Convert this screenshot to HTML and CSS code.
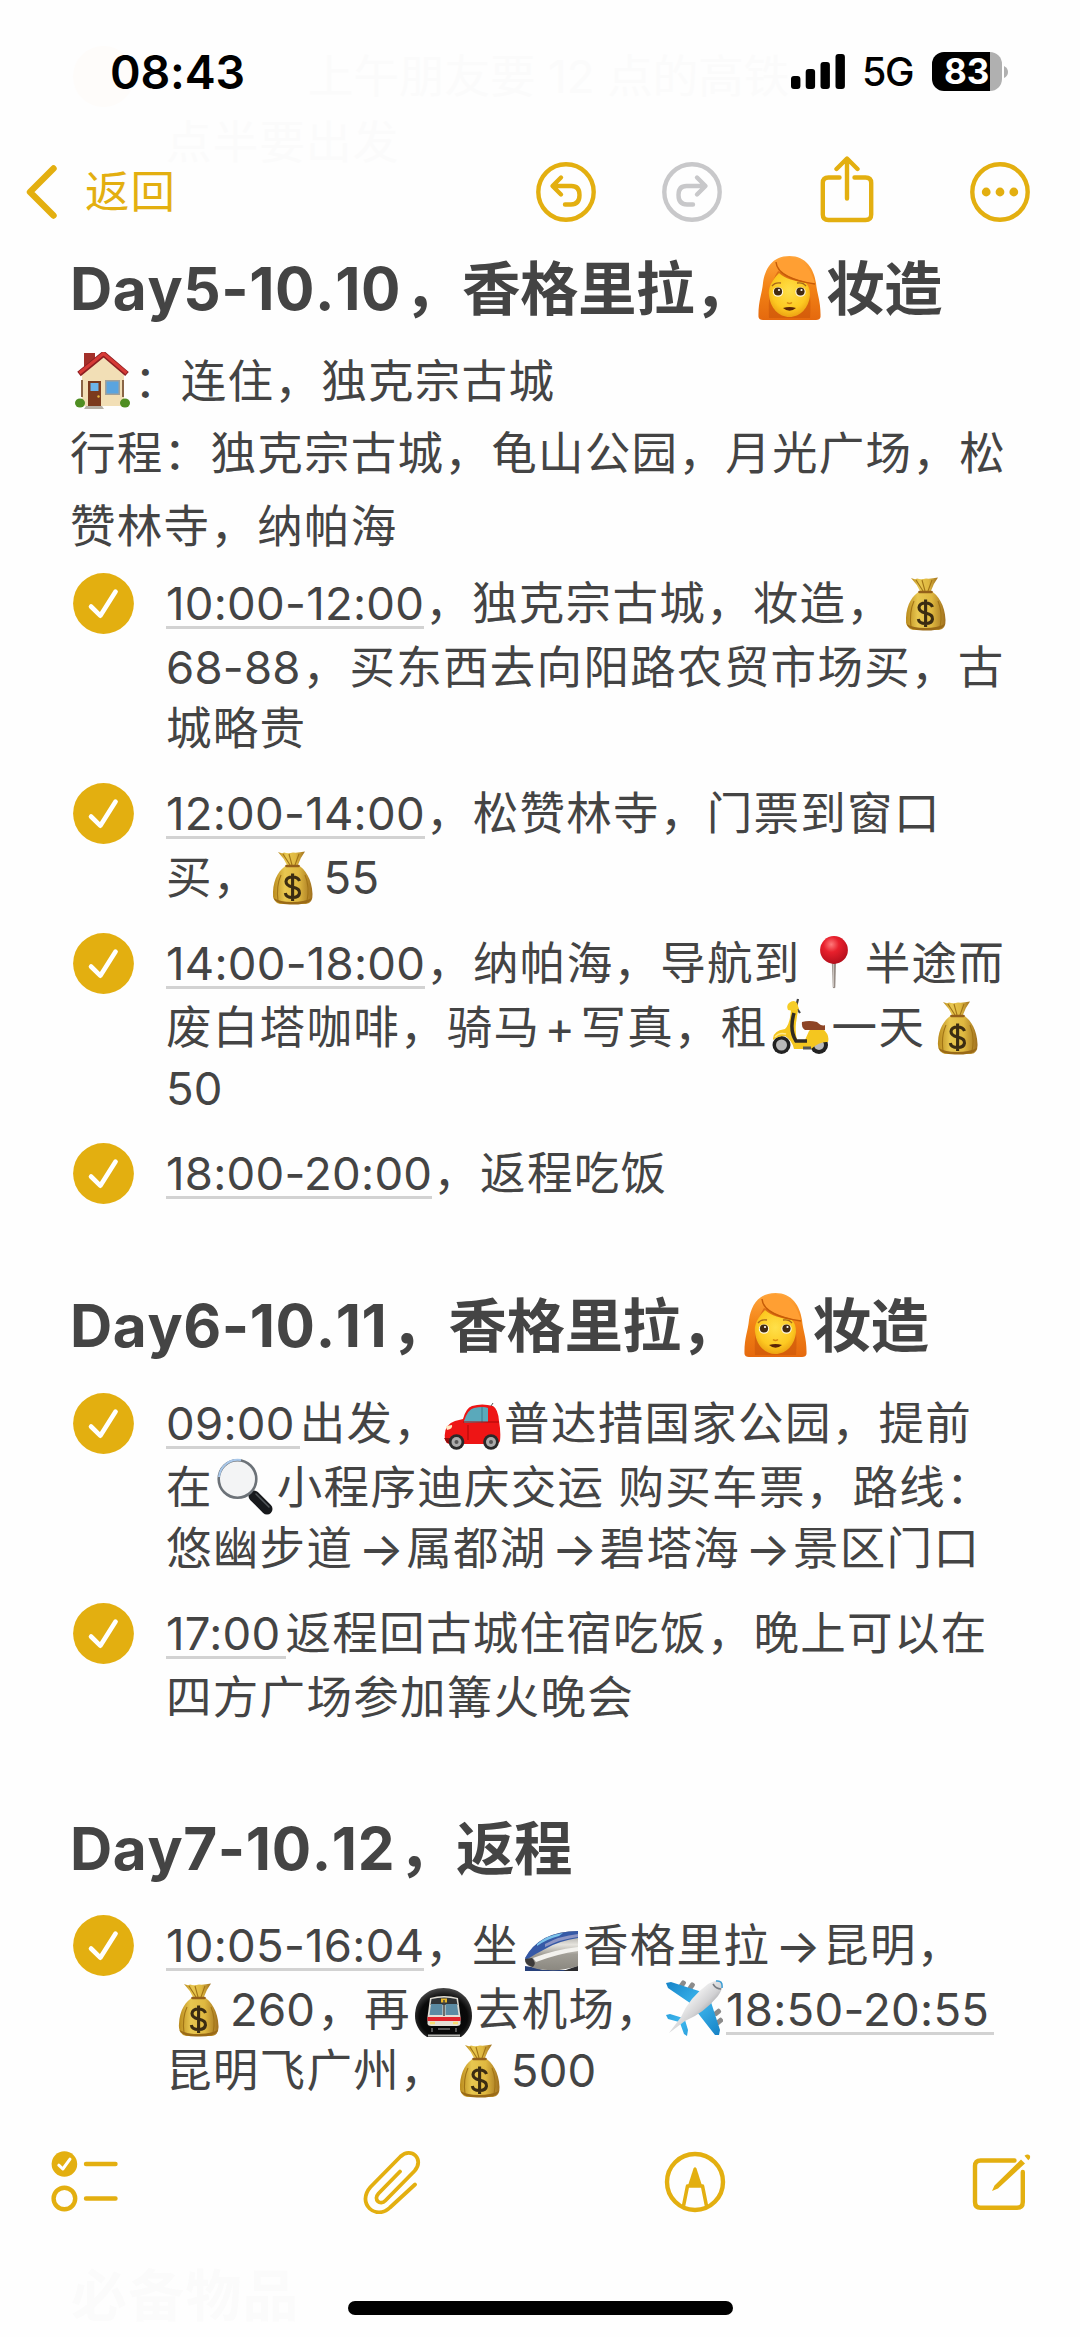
FILE: index.html
```
<!DOCTYPE html>
<html lang="zh-CN">
<head>
	<meta charset="UTF-8">
	<title>备忘录</title>
	<link rel="stylesheet" href="styles.css">
</head>
<body>

<!-- icons used several times in the page -->
<svg class="defs" width="0" height="0">
	<defs>
		<linearGradient id="gBag" x1="0" x2="1" y1="0" y2="0">
			<stop offset="0" stop-color="#b98a1c"/>
			<stop offset=".3" stop-color="#e8c750"/>
			<stop offset=".65" stop-color="#dfb840"/>
			<stop offset="1" stop-color="#a0701e"/>
		</linearGradient>
		<linearGradient id="gHair" x1="0" x2="0" y1="0" y2="1">
			<stop offset="0" stop-color="#ffa63d"/>
			<stop offset=".5" stop-color="#f28215"/>
			<stop offset="1" stop-color="#e5690e"/>
		</linearGradient>
		<radialGradient id="gFace" cx=".5" cy=".4" r=".6">
			<stop offset="0" stop-color="#ffe04a"/>
			<stop offset=".7" stop-color="#fdc921"/>
			<stop offset="1" stop-color="#eda313"/>
		</radialGradient>
		<radialGradient id="gPin" cx=".4" cy=".3" r=".7">
			<stop offset="0" stop-color="#ff7a7a"/>
			<stop offset=".4" stop-color="#e8202c"/>
			<stop offset="1" stop-color="#b50f1c"/>
		</radialGradient>
		<linearGradient id="gTrain" x1="0" x2="0" y1="0" y2="1">
			<stop offset="0" stop-color="#8c8b86"/>
			<stop offset=".35" stop-color="#e6e4de"/>
			<stop offset=".6" stop-color="#a09d95"/>
			<stop offset="1" stop-color="#8b8880"/>
		</linearGradient>
		<linearGradient id="gBlue" x1="0" x2="1" y1="0" y2="1">
			<stop offset="0" stop-color="#1583c8"/>
			<stop offset=".5" stop-color="#3db7ee"/>
			<stop offset="1" stop-color="#1580c4"/>
		</linearGradient>
		<linearGradient id="gBody" x1="0" x2="1" y1="0" y2="1">
			<stop offset=".3" stop-color="#fafafa"/>
			<stop offset=".55" stop-color="#d2d2d4"/>
			<stop offset=".75" stop-color="#8c8c90"/>
		</linearGradient>
		<radialGradient id="gTunnel" cx=".5" cy=".6" r=".6">
			<stop offset="0" stop-color="#000"/>
			<stop offset=".7" stop-color="#0a0a0a"/>
			<stop offset="1" stop-color="#4a4a4a"/>
		</radialGradient>
	</defs>

	<symbol id="check" viewBox="0 0 61 61">
		<circle cx="30.5" cy="30.5" r="30.4" fill="#e3af10"/>
		<path d="M18 33.5L27.3 42.7L42.6 18.6" fill="none" stroke="#fff" stroke-width="4.6" stroke-linecap="round" stroke-linejoin="round"/>
	</symbol>

	<symbol id="woman" viewBox="0 0 63 64">
		<path d="M31.5 0C14 0 7 13 5 27C4 38 0 46 .5 61Q1 64 5 64H58Q62 64 62.5 61C63 46 59 38 58 27C56 13 48 0 31.5 0Z" fill="url(#gHair)"/>
		<path d="M20 15C12 28 10 40 11 62H52C53 46 53 34 46 24Z" fill="#c9540a" opacity=".55"/>
		<path d="M21 17C13 25 10 33 11 39C12 52 21 61 31.5 61C42 61 51 52 52 39C52 34 51 30 48 27C37 25 27 23 21 17Z" fill="url(#gFace)"/>
		<path d="M18 7C22 20 38 24 57 28C54 14 45 3 32 1C26 1 22 3 18 7Z" fill="#ff9f33"/>
		<path d="M18 6C19 18 36 25 57 28" fill="none" stroke="#c65c08" stroke-width="1.4"/>
		<ellipse cx="20" cy="36" rx="5.2" ry="4.8" fill="#fff8e0"/>
		<ellipse cx="42.5" cy="36" rx="5.2" ry="4.8" fill="#fff8e0"/>
		<circle cx="20" cy="35.5" r="4.1" fill="#432a10"/>
		<circle cx="42.5" cy="35.5" r="4.1" fill="#432a10"/>
		<circle cx="21" cy="34" r="1.1" fill="#fff"/>
		<circle cx="43.5" cy="34" r="1.1" fill="#fff"/>
		<path d="M14 30Q17 26 23 27M39 27Q45 26 48 30" fill="none" stroke="#a8671a" stroke-width="1.3"/>
		<path d="M29 46.5Q31.5 48.5 34 46.5" fill="none" stroke="#d98a10" stroke-width="1.5"/>
		<path d="M25 52Q31.5 50 38 52Q31.5 57.5 25 52Z" fill="#5c2508"/>
	</symbol>

	<symbol id="house" viewBox="0 0 57 57">
		<rect x="10" y="1" width="11" height="17" fill="#a3302a"/>
		<path d="M8 22L30 3L50 22V54H8Z" fill="#f2dfb6"/>
		<path d="M8 28V45M49 28V45" stroke="#8a6546" stroke-width="2"/>
		<path d="M5 22L29.5 2L53 22" fill="none" stroke="#8d1f22" stroke-width="5.5" stroke-linejoin="round"/>
		<path d="M5.5 21L29.5 1.5L52.5 21" fill="none" stroke="#d63a36" stroke-width="3"/>
		<rect x="14" y="29" width="13" height="25" fill="#7b3a1e"/>
		<rect x="16.5" y="31" width="8" height="8" fill="#6cb4ea"/>
		<circle cx="24.5" cy="44.5" r="1.2" fill="#e8b640"/>
		<rect x="31" y="28" width="15" height="15" fill="#a3a098"/>
		<rect x="32.5" y="29.5" width="12" height="12" fill="#5aa4e0"/>
		<ellipse cx="6" cy="51" rx="5" ry="4.5" fill="#4f8e22"/>
		<ellipse cx="51" cy="51" rx="5" ry="4.5" fill="#4f8e22"/>
		<path d="M12 54H28L30 57H10Z" fill="#b5b0a6"/>
	</symbol>

	<symbol id="bag" viewBox="0 0 57 57">
		<path d="M14 4Q18 6 20 4.5Q24 6 29 4.5Q34 5 41 3.5Q36 10 33.5 18H23.5Q20 10 14 4Z" fill="url(#gBag)"/>
		<path d="M23 17C16 21 9.5 30 9 44Q8 54 16 56H42Q49 55 48.5 46C48 31 41 21 34 17Z" fill="url(#gBag)"/>
		<path d="M19 6L26 17M25 6L28 17M35 6L31 17M17 27Q12 38 14 53M41 27Q46 39 43 53" fill="none" stroke="#a17416" stroke-width="1.1"/>
		<path d="M9.5 50Q12 57 28 56.5Q46 57 48 50Q40 54 28 54Q16 54 9.5 50Z" fill="#9a6a17"/>
		<path d="M22.5 18H34.5" stroke="#94601a" stroke-width="2.6" stroke-linecap="round"/>
		<path d="M35.5 33Q34 29 28.5 29Q22.5 29 22 33.5Q22 37.5 28.5 39Q36 40.5 35.5 45Q35 49.5 28.5 49.5Q22 49.5 21.3 45M28.6 25.5V53" fill="none" stroke="#3b2c12" stroke-width="3.1"/>
	</symbol>

	<symbol id="pin" viewBox="0 0 57 57">
		<path d="M26.8 28H31L30.3 53.5Q29 55 27.8 53.5Z" fill="#968c86"/>
		<path d="M28.3 30V53" stroke="#d8d1cc" stroke-width="1"/>
		<circle cx="29" cy="16" r="13.9" fill="url(#gPin)"/>
	</symbol>

	<symbol id="scooter" viewBox="0 0 57 57">
		<circle cx="9.5" cy="47" r="9" fill="#222"/>
		<circle cx="9.5" cy="47" r="5.5" fill="#b9b9b9"/>
		<circle cx="47" cy="47" r="9" fill="#222"/>
		<circle cx="47" cy="47" r="5" fill="#b9b9b9"/>
		<path d="M26 1L24 9L28 15" fill="none" stroke="#444" stroke-width="2.2"/>
		<path d="M17 5Q22 1 25 5L27 11Q23 14 16 12Q14 8 17 5Z" fill="#f6cd27"/>
		<path d="M19 12H26L24 25Q23 35 25 42H33L37 33Q43 26 51 31Q58 37 56 44Q48 43 39 51H22Q20 42 13 38Q6 38 1 42Q0 33 13 31Q18 26 19 12Z" fill="#f4c61f"/>
		<path d="M22 15Q17 32 24 43H35" fill="none" stroke="#302a22" stroke-width="3.5"/>
		<path d="M3 39Q7 34 14 36" fill="none" stroke="#ffe98a" stroke-width="1.5"/>
		<path d="M30 24Q37 22 45 24Q50 29 53 27V32H33Q29 29 30 24Z" fill="#8e4526"/>
		<path d="M31 50H39" stroke="#555" stroke-width="3"/>
	</symbol>

	<symbol id="car" viewBox="0 0 57 57">
		<path d="M1 45Q-1 31 11 27L19 25Q22 14 28 12Q38 9 49 12Q54 15 55 27Q57 38 56 47Q55 50 51 50H6Q2 50 1 45Z" fill="#ee1515"/>
		<path d="M20 27Q24 15 30 14Q39 12 44 14V28L22 29Q19 29 20 27Z" fill="#5aa9bb"/>
		<path d="M38 13V29" stroke="#397b8c" stroke-width="1"/>
		<path d="M19 28H55M24 31V46" stroke="#a80808" stroke-width="1"/>
		<path d="M2 32L8 31Q9 35 3 36Z" fill="#ffe9c4"/>
		<path d="M47 12L49 9" stroke="#555" stroke-width="1"/>
		<path d="M0 44H8V49H3Z" fill="#940b0b"/>
		<circle cx="12.5" cy="48" r="7.8" fill="#292929"/>
		<circle cx="12.5" cy="48" r="5" fill="#aaa"/>
		<circle cx="12.5" cy="48" r="2" fill="#555"/>
		<circle cx="47" cy="48" r="7.8" fill="#292929"/>
		<circle cx="47" cy="48" r="5" fill="#aaa"/>
		<circle cx="47" cy="48" r="2" fill="#555"/>
	</symbol>

	<symbol id="magnifier" viewBox="0 0 57 57">
		<path d="M32 35L38 40" stroke="#888" stroke-width="4"/>
		<path d="M37 38L50 51" stroke="#17191c" stroke-width="11" stroke-linecap="round"/>
		<path d="M39 36L52 49" stroke="#53575b" stroke-width="1.5" stroke-linecap="round"/>
		<circle cx="20.5" cy="21" r="18.8" fill="#f3f4f5" stroke="#6c7278" stroke-width="2.6"/>
		<path d="M2 19A19 19 0 0 1 24 2" fill="none" stroke="#a9c8ea" stroke-width="2"/>
	</symbol>

	<symbol id="train" viewBox="0 0 57 57">
		<path d="M2 50Q12 51 20 54H55V55H2Z" fill="#27407a"/>
		<path d="M2 43Q9 29 22 22Q36 15 55 15V50Q40 55 25 54Q15 54 8 51Q1 48 2 43Z" fill="url(#gTrain)"/>
		<path d="M2 42Q9 29 22 22Q36 15 55 15V22Q36 25 24 32Q12 38 3 44Z" fill="#3659a6"/>
		<path d="M14 28Q24 19 40 17L36 20Q24 23 14 30Z" fill="#7cc3ea"/>
		<path d="M22 28Q36 20 55 18V21Q38 23 22 31Z" fill="#8d95c4"/>
		<path d="M2 43L9 42Q14 47 10 51Q2 49 2 43Z" fill="#3c3a3a"/>
		<path d="M10 42Q30 34 55 31V35Q34 38 13 46Z" fill="#f3f2ee"/>
		<path d="M40 55Q48 52 55 50V55Z" fill="#2b2b2e"/>
	</symbol>

	<symbol id="metro" viewBox="0 0 57 57">
		<path d="M12 57C4 52 0 44 0 36C0 19 12 8 28.5 8C45 8 57 19 57 36C57 44 53 52 46 57Z" fill="url(#gTunnel)"/>
		<path d="M15 18Q29 14 43 18L45.5 37V44Q45 46 42 46H16Q13 46 12.5 44V37Z" fill="#e2dfd6"/>
		<path d="M16.5 19Q29 16 41.5 19L42.5 25H15.5Z" fill="#303437"/>
		<rect x="26" y="18.5" width="6" height="4" fill="#e8b72a"/>
		<path d="M16 24H27.5V35H14.5ZM30.5 24H42L43.5 35H30.5Z" fill="#5b8ba3"/>
		<path d="M29 20V36" stroke="#444" stroke-width="1.5"/>
		<path d="M12.5 37H45.5V41H12.5Z" fill="#e0242c"/>
		<path d="M15 43H20M38 43H43" stroke="#f8dd71" stroke-width="2.5"/>
		<path d="M17 48V52M41 48V52M23 49H35" stroke="#555" stroke-width="2"/>
		<path d="M13 55.5H45" stroke="#b9b9b5" stroke-width="2"/>
	</symbol>

	<symbol id="plane" viewBox="0 0 57 57">
		<rect x="14" y="0" width="5" height="8" rx="2" transform="rotate(35 16 4)" fill="#8b8b8b"/>
		<rect x="23" y="2" width="5" height="8" rx="2" transform="rotate(35 25 6)" fill="#8b8b8b"/>
		<rect x="49" y="28" width="5" height="8" rx="2" transform="rotate(50 51 32)" fill="#8b8b8b"/>
		<rect x="51" y="37" width="5" height="8" rx="2" transform="rotate(50 53 41)" fill="#8b8b8b"/>
		<path d="M0 3L5 2L36 12L24 23L2 8ZM44 19L54 50L53 55L49 55L31 32ZM0 35L4 34L17 38L13 42L2 39ZM19 40L22 50L21 56L18 54L14 43Z" fill="url(#gBlue)"/>
		<path d="M55 1Q59 6 52 16Q38 33 19 41L3 53L15 37Q23 18 42 4Q51 -1 55 1Z" fill="url(#gBody)"/>
		<path d="M47 4Q50 9 55 9" fill="none" stroke="#777c82" stroke-width="1.5"/>
		<path d="M50 1Q57 0 56 8" fill="none" stroke="#3a9fd8" stroke-width="1.5"/>
	</symbol>
</svg>

<!-- text scrolled under the translucent bars -->
<div class="ghost ghost-top">
	<p><i></i>上午朋友要 12 点的高铁</p>
	<p>点半要出发</p>
</div>
<div class="ghost ghost-bottom">必备物品</div>

<header class="status">
	<span class="clock">08:43</span>
	<div class="status-right">
		<svg class="signal" width="54" height="35" viewBox="0 0 54 35">
			<rect x="0" y="22" width="9.4" height="13" rx="3"/>
			<rect x="14.7" y="15" width="9.4" height="20" rx="3"/>
			<rect x="29.5" y="8" width="9.4" height="27" rx="3"/>
			<rect x="44.5" y="0" width="9.4" height="35" rx="3"/>
		</svg>
		<span class="network">5G</span>
		<div class="battery"><span>83</span></div>
		<svg class="nub" width="4" height="12" viewBox="0 0 4 12"><path d="M0 0Q4 2 4 6Q4 10 0 12Z" fill="#b0b0b0"/></svg>
	</div>
</header>

<nav class="navbar">
	<a class="back">
		<svg width="31" height="54" viewBox="0 0 31 54"><path d="M27.5 3.5L4 27L27.5 50.5" stroke-width="6.4"/></svg>
		<span>返回</span>
	</a>
	<div class="actions">
		<svg width="62" height="62" viewBox="0 0 62 62">
			<circle cx="31" cy="31" r="27.7"/>
			<path d="M26 16.5L17.5 25L26 33.5M18 25H36.5Q44.5 25 44.5 34Q44.5 43.5 36 43.5H30"/>
		</svg>
		<svg class="off" width="62" height="62" viewBox="0 0 62 62">
			<circle cx="31" cy="31" r="27.7"/>
			<path d="M36 16.5L44.5 25L36 33.5M44 25H25.5Q17.5 25 17.5 34Q17.5 43.5 26 43.5H32"/>
		</svg>
		<svg width="56" height="68" viewBox="0 0 56 68">
			<path d="M20.5 21.5H9.5Q3.8 21.5 3.8 27V58.5Q3.8 64 9.5 64H46.5Q52.2 64 52.2 58.5V27Q52.2 21.5 46.5 21.5H35.5M28 42.5V3M17.5 13L28 2.5L38.5 13"/>
		</svg>
		<svg width="62" height="62" viewBox="0 0 62 62">
			<circle cx="31" cy="31" r="27.7"/>
			<g class="solid"><circle cx="17.2" cy="31" r="4.4"/><circle cx="31" cy="31" r="4.4"/><circle cx="44.8" cy="31" r="4.4"/></g>
		</svg>
	</div>
</nav>

<main class="note">
	<h1><b>Day5-10.10</b>，香格里拉，<svg class="big"><use href="#woman"/></svg>妆造</h1>
	<p>
		<svg class="emoji"><use href="#house"/></svg>：连住，独克宗古城<br>
		行程：独克宗古城，龟山公园，月光广场，松<br>
		赞林寺，纳帕海
	</p>
	<ul>
		<li>
			<svg class="check"><use href="#check"/></svg>
			<div>
				<span class="line"><u>10:00-12:00</u>，独克宗古城，妆造，<svg class="emoji"><use href="#bag"/></svg></span>
				<span class="line"><b>68-88</b>，买东西去向阳路农贸市场买，古</span>
				<span class="line">城略贵</span>
			</div>
		</li>
		<li>
			<svg class="check"><use href="#check"/></svg>
			<div>
				<span class="line"><u>12:00-14:00</u>，松赞林寺，门票到窗口</span>
				<span class="line">买，<svg class="emoji"><use href="#bag"/></svg><b>55</b></span>
			</div>
		</li>
		<li>
			<svg class="check"><use href="#check"/></svg>
			<div>
				<span class="line"><u>14:00-18:00</u>，纳帕海，导航到<svg class="emoji"><use href="#pin"/></svg>半途而</span>
				<span class="line">废白塔咖啡，骑马<span class="plus">+</span>写真，租<svg class="emoji"><use href="#scooter"/></svg>一天<svg class="emoji"><use href="#bag"/></svg></span>
				<span class="line"><b>50</b></span>
			</div>
		</li>
		<li>
			<svg class="check"><use href="#check"/></svg>
			<div>
				<span class="line"><u>18:00-20:00</u>，返程吃饭</span>
			</div>
		</li>
	</ul>

	<h2><b>Day6-10.11</b>，香格里拉，<svg class="big"><use href="#woman"/></svg>妆造</h2>
	<ul>
		<li>
			<svg class="check"><use href="#check"/></svg>
			<div>
				<span class="line"><u class="wide">09:00</u>出发，<svg class="emoji"><use href="#car"/></svg>普达措国家公园，提前</span>
				<span class="line">在<svg class="emoji"><use href="#magnifier"/></svg>小程序迪庆交运 购买车票，路线：</span>
				<span class="line">悠幽步道<span class="arrow">→</span>属都湖<span class="arrow">→</span>碧塔海<span class="arrow">→</span>景区门口</span>
			</div>
		</li>
		<li>
			<svg class="check"><use href="#check"/></svg>
			<div>
				<span class="line"><u class="wide">17:00</u>返程回古城住宿吃饭，晚上可以在</span>
				<span class="line">四方广场参加篝火晚会</span>
			</div>
		</li>
	</ul>

	<h2><b>Day7-10.12</b>，返程</h2>
	<ul>
		<li>
			<svg class="check"><use href="#check"/></svg>
			<div>
				<span class="line"><u>10:05-16:04</u>，坐<svg class="emoji"><use href="#train"/></svg>香格里拉<span class="arrow">→</span>昆明，</span>
				<span class="line"><svg class="emoji"><use href="#bag"/></svg><b>260</b>，再<svg class="emoji"><use href="#metro"/></svg>去机场，<svg class="emoji"><use href="#plane"/></svg><u class="wide">18:50-20:55</u></span>
				<span class="line">昆明飞广州，<svg class="emoji"><use href="#bag"/></svg><b>500</b></span>
			</div>
		</li>
	</ul>
</main>

<footer class="toolbar">
	<svg width="68" height="64" viewBox="0 0 68 64">
		<circle class="solid" cx="13.4" cy="14" r="12.8"/>
		<path class="white" d="M7.8 15.2L11.8 19L19 9.2"/>
		<circle cx="13.4" cy="48.5" r="10.8"/>
		<path d="M35 14H64.5M35 48.5H64.5"/>
	</svg>
	<svg width="58" height="64" viewBox="0 0 58 64">
		<path stroke-width="3.8" d="M37 21.5L15.5 43.5C10 49.5 17 56 22.5 50.5L51.5 21C62 9 48 -3.5 37.5 6.5L7.5 37C-7 53.5 13 71 27 57.5L52 34.5"/>
	</svg>
	<svg width="62" height="62" viewBox="0 0 62 62">
		<circle cx="31" cy="31" r="28"/>
		<path stroke-width="3.6" d="M19.5 55L23.5 35H38.5L42.5 55"/>
		<path class="solid" d="M29.5 17.5Q31 15 32.5 17.5L38.5 36H23.5Z"/>
	</svg>
	<svg width="62" height="62" viewBox="0 0 62 62">
		<path d="M44.5 9.5H10.5Q5 9.5 5 15V51Q5 56.8 10.5 56.8H47Q52.8 56.8 52.8 51V21"/>
		<path class="solid" d="M51 8.5L55 12.5L28 37.5L22 40L24.5 34.5ZM54.5 4.8Q57.5 2.2 59.8 4.5Q61 7 58.3 9.3Z"/>
	</svg>
</footer>
<div class="home"></div>

</body>
</html>
```
FILE: styles.css
```
* {
	box-sizing: border-box;
}

body {
	position: relative;
	width: 1080px;
	height: 2337px;
	margin: 0;
	overflow: hidden;
	background: #fefefe;
	color: #444;
	font-family: Inter, "Noto Sans CJK SC", sans-serif;
	font-size: 45.5px;
}

.defs {
	position: absolute;
}

/* text behind the bars */
.ghost {
	position: absolute;
	z-index: -1;
	color: #fbfbfb;
	letter-spacing: 1.2px;
	white-space: nowrap;
}

.ghost p {
	margin: 0;
	line-height: 66px;
}

.ghost i {
	position: absolute;
	left: -93px;
	top: 2px;
	width: 61px;
	height: 61px;
	border-radius: 50%;
	background: #fefcfa;
}

.ghost-top {
	left: 166px;
	top: 44px;
}

.ghost-top p:first-child {
	padding-left: 142px;
	letter-spacing: 0;
}

.ghost-bottom {
	left: 71px;
	top: 2251px;
	font-size: 56px;
	font-weight: 700;
}

/* status bar */
.status {
	display: flex;
	justify-content: space-between;
	align-items: center;
	height: 143px;
	padding: 0 72px 0 110px;
	color: #000;
}

.clock {
	font-size: 46.5px;
	font-weight: 600;
	letter-spacing: -0.2px;
}

.status-right {
	display: flex;
	align-items: center;
}

.network {
	width: 87px;
	padding-left: 17px;
	font-size: 39.5px;
	font-weight: 500;
	letter-spacing: -1.5px;
	line-height: 40px;
}

.battery {
	width: 70px;
	height: 39px;
	border-radius: 12px;
	background: linear-gradient(90deg, #000 58px, #b0b0b0 58px);
	color: #fff;
	font-size: 35px;
	font-weight: 700;
	line-height: 39px;
	padding-left: 12px;
}

.nub {
	margin-left: 2px;
}

/* top buttons */
.navbar {
	display: flex;
	justify-content: space-between;
	align-items: center;
	height: 97px;
	padding: 0 49px 0 26px;
}

.navbar svg, .toolbar svg {
	fill: none;
	stroke: #e3af10;
	stroke-width: 4.4;
	stroke-linecap: round;
	stroke-linejoin: round;
}

.back {
	display: flex;
	align-items: center;
	gap: 28px;
	color: #e3af10;
	font-size: 44.5px;
	letter-spacing: 1px;
	line-height: 60px;
}

.actions {
	display: flex;
	align-items: center;
}

.actions svg:nth-child(2) { margin-left: 64px; }
.actions svg:nth-child(3) { margin: -4px 0 0 96px; }
.actions svg:nth-child(4) { margin-left: 94px; }

.navbar .off {
	stroke: #c8c8ca;
}

.navbar .solid, .toolbar .solid {
	fill: #e3af10;
	stroke: none;
}

.toolbar .white {
	stroke: #fff;
	stroke-width: 3;
}

/* note */
.note {
	height: 1870px;
	padding: 9px 0 0 70px;
	letter-spacing: 1.3px;
	white-space: nowrap;
}

h1, h2 {
	margin: 0;
	font-size: 58.5px;
	font-weight: 700;
	line-height: 80px;
	letter-spacing: -0.5px;
}

h1 b, h2 b {
	margin-right: 3px;
	font-weight: 700;
	font-kerning: none;
	letter-spacing: 0.6px;
}

h2 {
	margin-top: 82px;
}

h2:last-of-type {
	margin-top: 80.5px;
}

.note p {
	margin: 17px 0 10px;
	line-height: 72.3px;
}

ul {
	display: flex;
	flex-direction: column;
	gap: 24.5px;
	margin: 0;
	padding: 0;
	list-style: none;
}

h2 + ul {
	margin-top: 26.5px;
}

li {
	display: grid;
	grid-template-columns: 93px 1fr;
	padding-left: 3px;
}

.line {
	display: block;
	height: 61px;
	line-height: 61px;
}

.line:nth-child(2) {
	margin-top: 3px;
}

.check {
	width: 61px;
	height: 61px;
}

.emoji {
	width: 57px;
	height: 57px;
	margin: 0 3px 0 4px;
	vertical-align: -11px;
}

.big {
	width: 63px;
	height: 64px;
	margin: 0 5px 0 6px;
	vertical-align: -10px;
}

u {
	display: inline-block;
	margin-right: 1px;
	line-height: 45px;
	border-bottom: 3px solid #d2d2d2;
	letter-spacing: 0.25px;
	text-decoration: none;
}

u.wide {
	margin-right: 0;
	padding-right: 5px;
}

.line b {
	margin-right: 2px;
	font-weight: 400;
	letter-spacing: 0.2px;
}

.plus {
	display: inline-block;
	width: 40px;
	text-align: center;
}

.arrow {
	display: inline-block;
	width: 53px;
	padding-left: 4px;
	font-size: 48px;
	line-height: 40px;
	text-align: center;
	vertical-align: -1px;
}

/* bottom buttons */
.toolbar {
	display: flex;
	justify-content: space-between;
	align-items: center;
	height: 144px;
	padding: 0 48px 0 51px;
}

.home {
	width: 385px;
	height: 14px;
	margin: 47px auto 0;
	border-radius: 7px;
	background: #000;
}
```
